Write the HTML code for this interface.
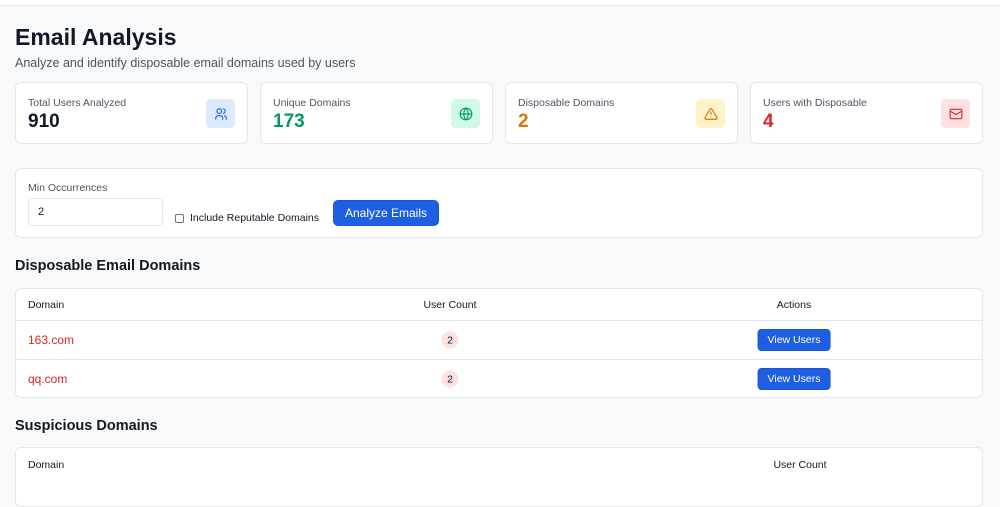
<!DOCTYPE html>
<html><head><meta charset="utf-8"><style>
*{box-sizing:border-box;margin:0;padding:0}
body{width:1000px;height:492px;overflow:hidden;background:#f8f9fa;font-family:"Liberation Sans",sans-serif;color:#111827;position:relative}
.top{position:absolute;left:0;top:0;width:1000px;height:6px;background:#fff;border-bottom:1px solid #e5e7eb}
h1{position:absolute;left:15px;top:24px;font-size:23px;font-weight:700;color:#111827}
.sub{position:absolute;left:15px;top:56px;font-size:12.5px;color:#4b5563}
.card{position:absolute;top:82px;width:233px;height:62px;background:#fff;border:1px solid #e5e7eb;border-radius:6px}
.card .l{position:absolute;left:12px;top:14px;font-size:10.5px;color:#4b5563}
.card .v{position:absolute;left:12px;top:28px;font-size:19px;font-weight:700}
.card .ic{position:absolute;right:12px;top:16px;width:29px;height:29px;border-radius:5px;display:flex;align-items:center;justify-content:center}
.box{position:absolute;left:15px;top:168px;width:968px;height:70px;background:#fff;border:1px solid #e5e7eb;border-radius:6px}
h2{position:absolute;left:15px;font-size:14.5px;font-weight:700;color:#111827}
.tbl{position:absolute;left:15px;width:968px;background:#fff;border:1px solid #e5e7eb;border-radius:6px;overflow:hidden}
.row{position:relative;border-bottom:1px solid #e5e7eb;font-size:10.5px}
.row:last-child{border-bottom:none}
.row span{position:absolute;top:50%;transform:translateY(-50%)}
.c{transform:translate(-50%,-50%)!important}
.dom{color:#dc2626;font-size:12px}
.badge{width:17px;height:17px;border-radius:50%;background:#fee2e2;display:inline-flex;align-items:center;justify-content:center;font-size:10.5px}
.btn{background:#1d5fe0;color:#fff;border-radius:4px;padding:4px 9px;font-size:10.5px;border:1px solid #1a56db}
</style></head><body>
<div class="top"></div>
<h1>Email Analysis</h1>
<div class="sub">Analyze and identify disposable email domains used by users</div>

<div class="card" style="left:15px"><div class="l">Total Users Analyzed</div><div class="v" style="color:#111827">910</div>
<div class="ic" style="background:#dbeafe"><svg width="14" height="14" viewBox="0 0 24 24" fill="none" stroke="#2563eb" stroke-width="2" stroke-linecap="round"><circle cx="9" cy="7" r="4"/><path d="M3 21v-2a4 4 0 0 1 4-4h4a4 4 0 0 1 4 4v2M16 3.1a4 4 0 0 1 0 7.8M21 21v-2a4 4 0 0 0-3-3.9"/></svg></div></div>
<div class="card" style="left:260px"><div class="l">Unique Domains</div><div class="v" style="color:#059669">173</div>
<div class="ic" style="background:#d1fae5"><svg width="14" height="14" viewBox="0 0 24 24" fill="none" stroke="#059669" stroke-width="2"><circle cx="12" cy="12" r="10"/><path d="M2 12h20M12 2a15 15 0 0 1 0 20M12 2a15 15 0 0 0 0 20"/></svg></div></div>
<div class="card" style="left:505px"><div class="l">Disposable Domains</div><div class="v" style="color:#d97706">2</div>
<div class="ic" style="background:#fef3c7"><svg width="14" height="14" viewBox="0 0 24 24" fill="none" stroke="#d97706" stroke-width="2" stroke-linecap="round"><path d="M10.3 3.9 1.8 18a2 2 0 0 0 1.7 3h17a2 2 0 0 0 1.7-3L13.7 3.9a2 2 0 0 0-3.4 0zM12 9v4M12 17h.01"/></svg></div></div>
<div class="card" style="left:750px"><div class="l">Users with Disposable</div><div class="v" style="color:#dc2626">4</div>
<div class="ic" style="background:#fee2e2"><svg width="14" height="14" viewBox="0 0 24 24" fill="none" stroke="#dc2626" stroke-width="2"><rect x="2" y="4" width="20" height="16" rx="2"/><path d="m22 7-10 6L2 7"/></svg></div></div>

<div class="box">
<div style="position:absolute;left:12px;top:13px;font-size:10.5px;color:#4b5563">Min Occurrences</div>
<div style="position:absolute;left:12px;top:29px;width:135px;height:28px;border:1px solid #e5e7eb;border-radius:5px;font-size:11px;padding:7px 9px">2</div>
<div style="position:absolute;left:159px;top:45px;width:9px;height:9px;border:1px solid #6b7280;border-radius:2px"></div>
<div style="position:absolute;left:174px;top:43px;font-size:10.5px;color:#111827">Include Reputable Domains</div>
<div style="position:absolute;left:317px;top:31px;width:106px;height:26px;background:#1d5fe0;border:1px solid #1a56db;border-radius:5px;color:#fff;font-size:12px;text-align:center;line-height:24px">Analyze Emails</div>
</div>

<h2 style="top:258px">Disposable Email Domains</h2>
<div class="tbl" style="top:288px;height:110px">
<div class="row" style="height:32px"><span style="left:12px">Domain</span><span class="c" style="left:434px">User Count</span><span class="c" style="left:778px">Actions</span></div>
<div class="row" style="height:39px"><span class="dom" style="left:12px">163.com</span><span class="c badge" style="left:434px">2</span><span class="c btn" style="left:778px">View Users</span></div>
<div class="row" style="height:38px"><span class="dom" style="left:12px">qq.com</span><span class="c badge" style="left:434px">2</span><span class="c btn" style="left:778px">View Users</span></div>
</div>

<h2 style="top:418px">Suspicious Domains</h2>
<div class="tbl" style="top:447px;height:60px">
<div class="row" style="height:34px"><span style="left:12px">Domain</span><span class="c" style="left:784px">User Count</span></div>
</div>
</body></html>
